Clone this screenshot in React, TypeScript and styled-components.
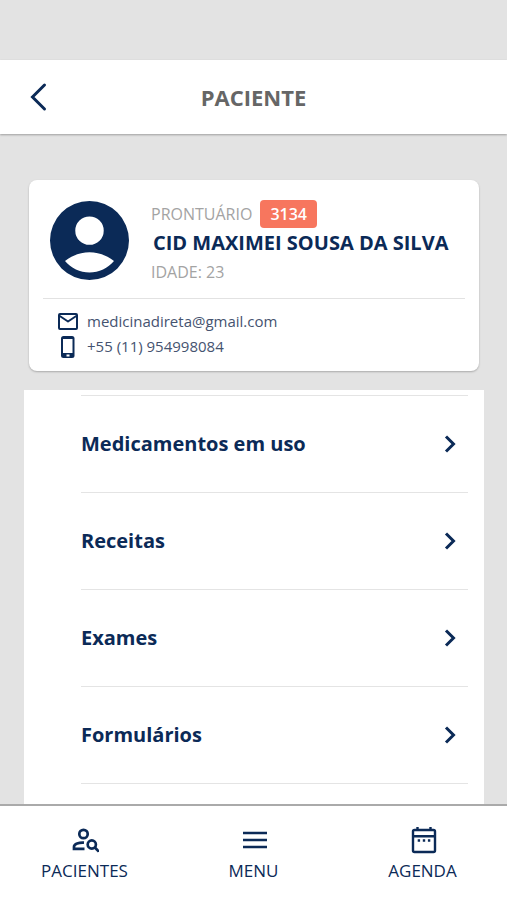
import React from "react";
import styled, { createGlobalStyle } from "styled-components";

const navy = "#0b2a57";
const grey = "#e3e3e3";

const GlobalStyle = createGlobalStyle`
  *, *::before, *::after { box-sizing: border-box; }
  body {
    margin: 0;
    background: ${grey};
    color: ${navy};
    font-family: "Open Sans", "Noto Sans", sans-serif;
  }
  button { font: inherit; color: inherit; background: none; border: 0; padding: 0; cursor: pointer; }
  a { color: inherit; text-decoration: none; }
  h1, h2, p, ul { margin: 0; padding: 0; }
  svg { display: block; flex: none; }
`;

const Page = styled.div`
  min-height: 100vh;
  display: flex;
  flex-direction: column;
  padding-top: 60px;
`;

const Header = styled.header`
  display: grid;
  grid-template-columns: 48px 1fr 48px;
  align-items: center;
  height: 74px;
  padding: 0 14px;
  background: #fff;
  box-shadow: 0 1px 2px rgba(0, 0, 0, 0.3);
`;

const BackButton = styled.button`
  display: flex;
  justify-content: center;
  align-items: center;
  height: 48px;
`;

const Title = styled.h1`
  font-size: 22px;
  line-height: 30px;
  font-weight: 700;
  text-align: center;
  color: #666;
`;

const Main = styled.main`
  flex: 1;
  display: flex;
  flex-direction: column;
  gap: 19px;
  padding: 46px 23px 0 24px;
`;

const Card = styled.section`
  margin: 0 5px;
  padding: 16px 14px 12px;
  border-radius: 8px;
  background: #fff;
  box-shadow: 0 1px 2px rgba(0, 0, 0, 0.25);
`;

const Profile = styled.div`
  display: flex;
  align-items: flex-start;
  gap: 22px;
  padding: 0 0 8px 7px;
  border-bottom: 1px solid #e2e2e2;
`;

const AvatarFrame = styled.div`
  padding-top: 5px;
`;

const Details = styled.div`
  display: flex;
  flex-direction: column;
  min-width: 0;
`;

const Record = styled.div`
  display: flex;
  align-items: center;
  gap: 8px;
  height: 36px;
`;

const Muted = styled.p`
  font-size: 16px;
  line-height: 24px;
  color: #a3a3a3;
`;

const Badge = styled.span`
  padding: 3px 10px;
  border-radius: 4px;
  background: #f7765e;
  color: #fff;
  font-size: 16px;
  line-height: 22px;
  font-weight: 600;
`;

const Name = styled.h2`
  padding-left: 2px;
  font-size: 20px;
  line-height: 22px;
  font-weight: 700;
`;

const Age = styled(Muted)`
  padding: 5px 0;
  line-height: 26px;
`;

const Contacts = styled.div`
  display: flex;
  flex-direction: column;
  padding: 10px 0 0 14px;
`;

const Contact = styled.a`
  display: flex;
  align-items: center;
  gap: 8px;
  height: 25px;
  font-size: 15px;
  line-height: 25px;
  color: #455370;
`;

const Menu = styled.ul`
  flex: 1;
  padding: 5px 16px 20px 57px;
  list-style: none;
  background: #fff;
`;

const MenuItem = styled.li`
  border-top: 1px solid #e4e4e4;
  &:last-child { border-bottom: 1px solid #e4e4e4; }
`;

const MenuButton = styled.button`
  display: flex;
  align-items: center;
  justify-content: space-between;
  width: 100%;
  height: 96px;
  padding-right: 12px;
  font-size: 20px;
  line-height: 28px;
  font-weight: 700;
  text-align: left;
`;

const Nav = styled.nav`
  position: sticky;
  bottom: 0;
  display: grid;
  grid-template-columns: repeat(3, 1fr);
  padding: 20px 0 17px;
  border-top: 2px solid #aaa;
  background: #fff;
`;

const NavButton = styled.button`
  display: flex;
  flex-direction: column;
  align-items: center;
  gap: 5px;
  font-size: 17px;
  line-height: 24px;
  font-weight: 500;
`;

const items = ["Medicamentos em uso", "Receitas", "Exames", "Formulários"];

const BackIcon = () => (
  <svg width="24" height="32" viewBox="0 0 24 32" fill="none" stroke={navy} strokeWidth="3" strokeLinecap="round" strokeLinejoin="miter" aria-hidden="true">
    <path d="M18.500 4 6.500 16l12 12" />
  </svg>
);

const Chevron = () => (
  <svg width="12" height="20" viewBox="0 0 12 20" fill="none" stroke={navy} strokeWidth="3" aria-hidden="true">
    <path d="M2 2.500 9.500 10 2 17.500" />
  </svg>
);

const Avatar = () => (
  <svg width="79" height="79" viewBox="2 2 20 20" fill={navy} role="img" aria-label="Foto do paciente">
    <path d="M12 2a10 10 0 1 0 0 20 10 10 0 0 0 0-20Zm0 3.900a3.600 3.600 0 1 1 0 7.200 3.600 3.600 0 0 1 0-7.200Zm0 14.200c-2.400 0-4.700-1.100-6.200-2.900 1.800-1.400 4-2.200 6.200-2.200s4.400.8 6.200 2.200c-1.500 1.800-3.800 2.900-6.200 2.900Z" />
  </svg>
);

const MailIcon = () => (
  <svg width="22" height="22" viewBox="0 0 22 22" fill="none" stroke={navy} strokeWidth="2" strokeLinejoin="round" aria-hidden="true">
    <rect x="2" y="3" width="18" height="15" rx="1" />
    <path d="m2 4.500 9 6 9-6" />
  </svg>
);

const PhoneIcon = () => (
  <svg width="22" height="24" viewBox="0 0 22 24" aria-hidden="true">
    <rect x="4" y="1" width="13.500" height="22" rx="2.500" fill={navy} />
    <rect x="6" y="4" width="9.500" height="14" fill="#fff" />
    <rect x="9.500" y="19.500" width="3" height="2" fill="#fff" />
  </svg>
);

const PatientsIcon = () => (
  <svg width="28" height="28" viewBox="0 0 28 28" fill="none" stroke={navy} strokeWidth="2.700" aria-hidden="true">
    <circle cx="12.500" cy="8" r="4.200" />
    <path d="M13 16.600C8 16.200 3 18 3 20.700v2.100h10.500" />
    <circle cx="20.800" cy="18.500" r="4.100" />
    <path d="m23.800 21.500 4 4" />
  </svg>
);

const MenuIcon = () => (
  <svg width="28" height="28" viewBox="0 0 28 28" stroke={navy} strokeWidth="2.500" aria-hidden="true">
    <path d="M3 7h24M3 14h24M3 21h24" />
  </svg>
);

const AgendaIcon = () => (
  <svg width="28" height="28" viewBox="0 0 28 28" fill="none" stroke={navy} strokeWidth="2.400" strokeLinejoin="round" aria-hidden="true">
    <rect x="4" y="4" width="22" height="22" rx="1.500" />
    <path d="M4 10.200h22M8.500 1v3M21.500 1v3" />
    <path d="M8.700 14.500h2.400M13.800 14.500h2.400M18.900 14.500h2.400" />
  </svg>
);

export default function App() {
  return (
    <>
      <GlobalStyle />
      <Page>
        <Header>
          <BackButton type="button" aria-label="Voltar"><BackIcon /></BackButton>
          <Title>PACIENTE</Title>
        </Header>
        <Main>
          <Card>
            <Profile>
              <AvatarFrame><Avatar /></AvatarFrame>
              <Details>
                <Record>
                  <Muted>PRONTUÁRIO</Muted>
                  <Badge>3134</Badge>
                </Record>
                <Name>CID MAXIMEI SOUSA DA SILVA</Name>
                <Age>IDADE: 23</Age>
              </Details>
            </Profile>
            <Contacts>
              <Contact href="mailto:medicinadireta@gmail.com"><MailIcon />medicinadireta@gmail.com</Contact>
              <Contact href="tel:+5511954998084"><PhoneIcon />+55 (11) 954998084</Contact>
            </Contacts>
          </Card>
          <Menu>
            {items.map((label) => (
              <MenuItem key={label}>
                <MenuButton type="button">{label}<Chevron /></MenuButton>
              </MenuItem>
            ))}
          </Menu>
        </Main>
        <Nav>
          <NavButton type="button"><PatientsIcon />PACIENTES</NavButton>
          <NavButton type="button"><MenuIcon />MENU</NavButton>
          <NavButton type="button"><AgendaIcon />AGENDA</NavButton>
        </Nav>
      </Page>
    </>
  );
}
